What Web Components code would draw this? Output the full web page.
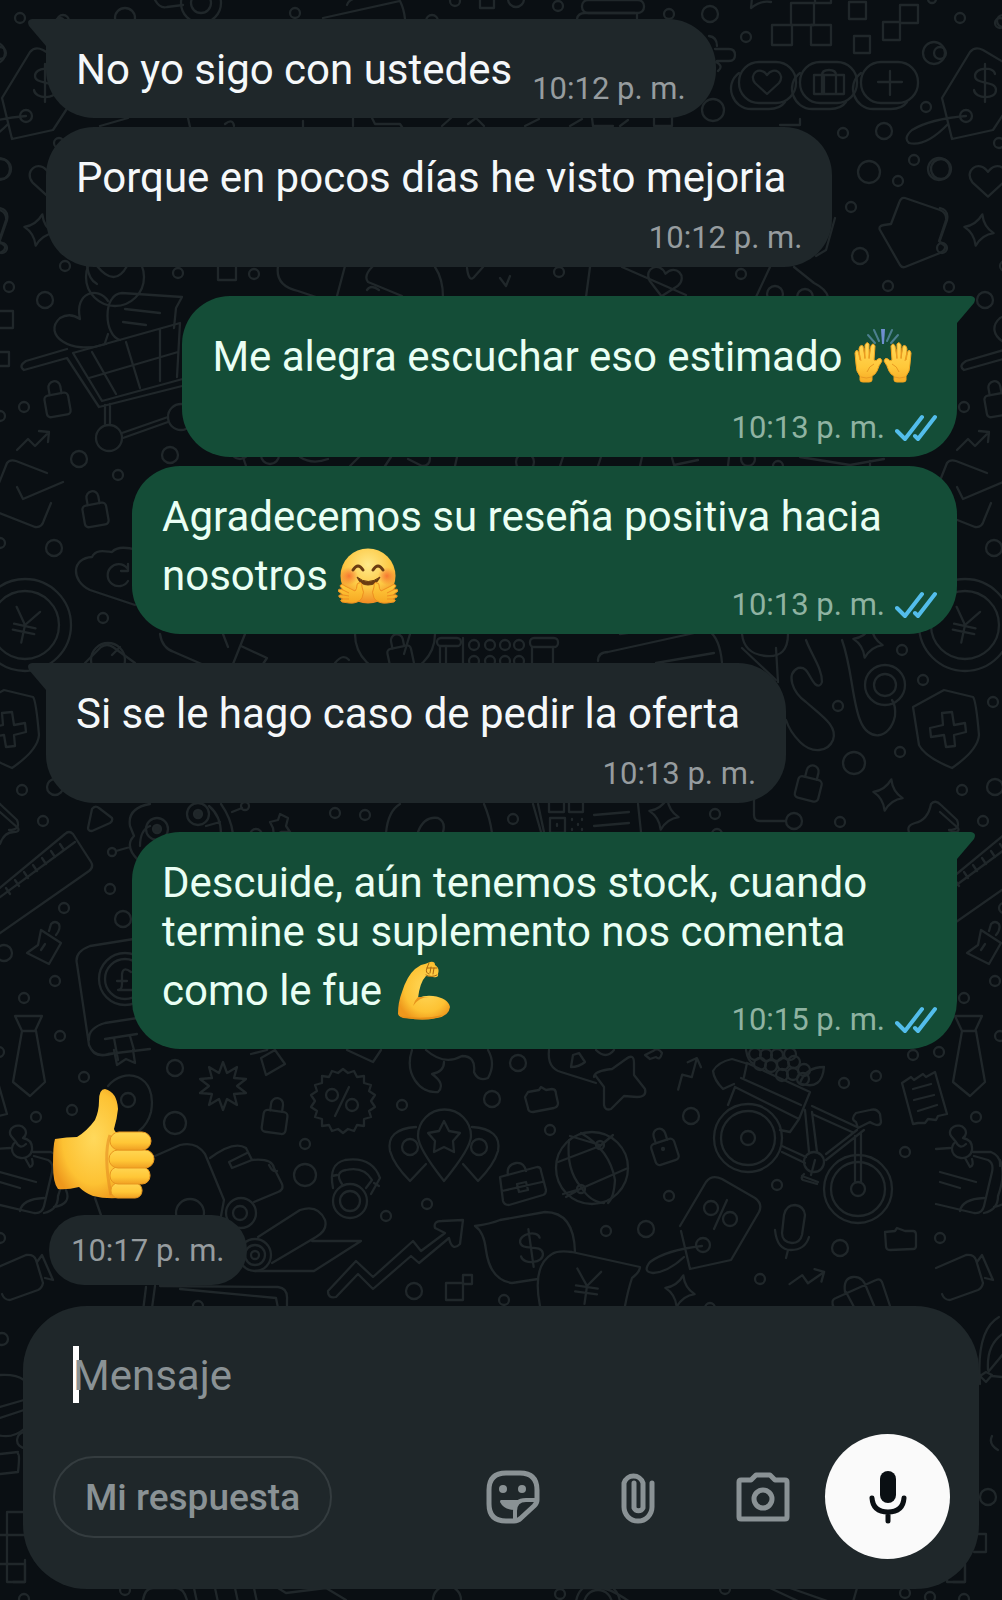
<!DOCTYPE html>
<html lang="es">
<head>
<meta charset="utf-8">
<meta name="viewport" content="width=device-width, initial-scale=1">
<title>Chat</title>
<style>
  body { margin: 0; background: #0a0f13; font-family: Roboto, "Liberation Sans", sans-serif; }
</style>
</head>
<body>
<chat-app>
  <chat-bubble tail meta="inline" time="10:12 p. m.">No yo sigo con ustedes</chat-bubble>
  <chat-bubble time="10:12 p. m.">Porque en pocos días he visto mejoria</chat-bubble>
  <chat-bubble out tail first time="10:13 p. m.">Me alegra escuchar eso estimado <chat-emoji name="hands"></chat-emoji></chat-bubble>
  <chat-bubble out meta="overlap" time="10:13 p. m.">Agradecemos su reseña positiva hacia nosotros <chat-emoji name="hug"></chat-emoji></chat-bubble>
  <chat-bubble tail first time="10:13 p. m.">Si se le hago caso de pedir la oferta</chat-bubble>
  <chat-bubble out tail first meta="overlap" time="10:15 p. m.">Descuide, aún tenemos stock, cuando termine su suplemento nos comenta como le fue <chat-emoji name="flex"></chat-emoji></chat-bubble>
  <chat-sticker time="10:17 p. m."><chat-emoji name="thumb"></chat-emoji></chat-sticker>
  <chat-composer slot="composer"></chat-composer>
</chat-app>

<script>
const define = (name, html, setup) => {
  const tpl = document.createElement('template');
  tpl.innerHTML = html;
  customElements.define(name, class extends HTMLElement {
    constructor() {
      super();
      this.attachShadow({ mode: 'open' }).append(tpl.content.cloneNode(true));
    }
    connectedCallback() { if (setup) setup(this, this.shadowRoot); }
  });
};

/* Wallpaper: small rings [x, y, r] and line doodles. The strip repeats every 940 units. */
const rings = [
  [20,18,5],[63,21,6],[125,18,10],[201,3,20],[201,3,10],[295,13,5],[455,1,5],[432,21,6],[0,53,6],[1,169,10],
  [2,248,5],[65,266,5],[178,273,5],[254,274,5],[9,287,5],[45,300,8],[558,6,5],[516,-1,8],[669,14,5],[710,14,8],
  [746,37,5],[713,110,11],[934,53,11],[926,107,5],[843,133,5],[884,131,8],[869,172,11],[898,181,5],[914,160,5],
  [939,169,11],[851,207,5],[860,256,8],[888,286,5],[741,274,5],[559,272,5],[932,-1,4],[59,143,5],[60,23,5],
  [24,407,5],[0,416,5],[79,459,8],[118,475,5],[170,455,8],[0,543,5],[54,548,8],[103,618,5],[108,660,17],
  [22,790,5],[55,787,8],[43,821,5],[110,889,5],[64,908,5],[123,919,8],[4,953,8],[55,981,5],[24,998,5],[60,1036,5],
  [335,813,5],[365,815,5],[256,835,6],[902,650,5],[923,680,5],[838,706,5],[854,763,11],[900,752,5],[53,702,5],
  [840,822,5],[513,819,5],[715,814,5],[794,821,8],[717,834,5],[84,1077,5],[72,1110,5],[36,1117,5],[175,1068,8],
  [175,1123,11],[128,1100,7],[402,1105,5],[492,1099,8],[305,1144,5],[305,1175,11],[427,1204,5],[386,1216,5],
  [414,1291,8],[518,1063,8],[550,1130,5],[691,1116,8],[669,1196,5],[646,1229,8],[606,1231,5],[777,1185,5],
  [844,1083,5],[876,1076,5],[905,1152,5],[840,1248,8],[760,1279,5],[913,1055,5],[939,1052,5],[0,1238,5],[504,1300,5],
  [198,1306,5],[710,1308,5],[2,1339,6],[24,1599,5],[125,1590,5],[560,1594,5],[905,1593,5],[930,1597,5],[447,1600,14],
  [965,1440,8],[988,1497,8],[725,1589,5],[240,450,9],[270,455,9],[525,462,9],[748,459,7],[778,466,5],[395,634,40],
  [578,1004,5],[190,1213,14],[240,1213,7]
];
const spark = (x, y, r = 15) => `<path transform="translate(${x} ${y}) rotate(12) scale(${r / 15})" d="M0-16Q4-4 15 0Q4 4 0 16Q-4 4-15 0Q-4-4 0-16z"/>`;
const lock = (x, y, a) => `<g transform="translate(${x} ${y}) rotate(${a})"><rect x="-12" y="-8" width="24" height="22" rx="4"/><path d="M-6-8v-7a6 6 0 0 1 12 0v7"/></g>`;
const rise = (x, y, a = 0) => `<path transform="translate(${x} ${y}) rotate(${a})" d="M-16 10L-5-1L2 6L15-7M6-9L16-8L15 2"/>`;
const rect = (x, y, w, h, r = 0) => `<rect x="${x}" y="${y}" width="${w}" height="${h}" rx="${r}"/>`;
const heart = (x, y, s, a = 0) => `<path transform="translate(${x} ${y}) rotate(${a}) scale(${s})" d="M0 12L-12 1C-19-8-7-17 0-7C7-17 19-8 12 1z"/>`;
const circ = (x, y, r) => `<circle cx="${x}" cy="${y}" r="${r}"/>`;
const pathStar = (x, y, n, r, q, a = 0) => {
  let d = '';
  for (let i = 0; i < n * 2; i++) {
    const t = a + Math.PI * i / n, k = i % 2 ? q : r;
    d += (i ? 'L' : 'M') + Math.round(x + k * Math.sin(t)) + ' ' + Math.round(y - k * Math.cos(t));
  }
  return `<path d="${d}z"/>`;
};
const dollar = (x, y, a = 0) => `<path transform="translate(${x} ${y}) rotate(${a})" d="M10-9C9-17-10-16-10-7C-10 2 11-3 11 7C11 17-10 16-11 7M0-19V19"/>`;
const yen = (x, y, a = 0) => `<path transform="translate(${x} ${y}) rotate(${a})" d="M-12-16L0 0L12-16M0 0V18M-11 1H11M-11 7H11"/>`;
const coin = (x, inner) => `<path d="M${x - 28} 73C${x - 44} 85 ${x - 34} 109 ${x - 16} 109H${x + 2}Q${x + 13} 109 ${x + 18} 102"/>` + rect(x - 28, 62, 57, 41, 20) + inner;

const doodles = [
  /* top strip */
  '<path d="M155 0q5 9 12 7l16-2M323 18L400 1q4 8 5 18M347 5q2-6 10-7"/>', rect(480, -8, 14, 16),
  rect(582, 0, 62, 13, 6), '<path d="M577 19q1-6 8-6h50M637 13v7M709 36q8 1 8 10M715 49h14q6 0 6 6t-6 6h-12M716 62q8 4 2 9M751 8q10-8 20-6M751 8l1-10M815 3v-8M831 3v-8M815 3h16"/>',
  rect(791, 3, 23, 22), rect(772, 25, 20, 20), rect(811, 25, 20, 20), rect(849, 2, 17, 17), rect(854, 36, 16, 17), rect(900, 5, 18, 18), rect(883, 22, 17, 18),
  coin(767, heart(767, 82, 1)), coin(828, rect(814, 75, 30, 19) + '<path d="M822 94V75q0-5 7-5t7 5v19M824 75v19"/>'), coin(889, '<path d="M878 82h24M890 71v24"/>'),
  '<path d="M942 98L970 52Q975 46 983 50L1010 66M942 98L952 139L993 130L1010 104M966 116Q930 119 912 130Q903 138 909 143Q926 147 948 124"/>', circ(966, 116, 6), dollar(985, 83),
  heart(988, 181, 1.3), spark(979, 230),
  '<path d="M905 198L940 210Q947 213 946 220L939 241L945 246Q946 250 940 253L905 267Q902 268 900 265L880 230Q878 226 884 225L891 224L899 203Q901 197 905 198zM835 218l-9 32l-10 6"/>',
  '<path d="M780 125l20 0l0-6M100 126l28-8M188 118l2 9M225 124q8-6 9 2M303 121v6M353 118v8M372 118l3 6h25l2 3M442 126l9-8M468 124l8-6l8 8M525 126l14-7M570 126l12-7M592 118l1 8h20M620 126l8-6M654 118v8h18v-8M0 208q9 2 7 12l-7 20"/>',
  /* strip above the first green bubble */
  circ(115, 277, 29), '<path d="M97 266q18 22 30 0"/>', rect(218, 262, 18, 18), '<path d="M278 266q-3 20 20 25l18 6M345 266l-8 30M373 266q-10 10-5 16l34 14M435 267q8 12 8 30M367 290q4-6 12 0M467 268q2 16 8 8l8-9M500 278l6 8l4-10M590 267l-4 30M622 267l64 28M770 267l-14 30M794 267l20 16q12 6 14 14"/>', heart(664, 282, 1.2, 10), circ(775, 294, 8), circ(805, 297, 8),
  /* cart */
  rect(-5, 311, 18, 17), rect(-5, 352, 14, 14),
  '<path d="M106 344C70 356 42 334 60 318Q70 312 80 319C74 292 98 286 108 301M120 340C104 336 102 294 122 293L182 297L176 308L174 328M125 309L160 313M123 322L146 325M108 334L105 343M87 266q2 14 10 18"/>',
  '<path d="M73 353L180 323L177 377M73 353L102 401L190 377M67 349L26 361Q18 366 24 370L67 358L99 407L190 384M92 352L116 394M126 342L140 388M160 330L160 381M89 378L178 352M105 405V424M110 404V425M122 433L168 417M123 438L168 422"/>',
  circ(109, 438, 13), circ(181, 417, 13), lock(57, 402, -10), rise(33, 440, 0),
  '<path d="M-3 488L7 463Q10 459 16 461L47 473M63 482L23 499L17 487M-3 512L35 527Q42 528 44 520L51 503"/>', lock(95, 512, -10),
  '<path d="M135 605L90 590C70 580 72 558 92 557C96 548 108 552 112 552C118 545 130 548 137 550M128 571v-7M128 571h-7M127 568a11 11 0 1 0 1 13"/>',
  circ(25, 625, 46), circ(25, 625, 34), yen(25, 625, 12),
  '<path d="M243 457l3 9M300 457q12 8 28 2M350 466l10-10M385 466l6-9M408 459l14 7q8 0 8-8M455 466l2-9M560 466l3-9M598 466l3-9M640 466l2-9M672 458l2 7l24-5M728 466l1-9M800 457l50 8l34-6M870 466v-5"/>',
  /* strip between green and grey */
  '<path d="M85 663l16-16q6-4 12 0l22 16M112 655l8-8M160 634q2 14 14 18l46 20M245 634l-12 30M241 646l26 12l-4 6M228 647l-5-13M335 663q8-10 14-3M410 634l-6 20M440 646v18M446 646v18M620 634l96-14M598 661q0-9 10-9l100-22q12 8 14 33M656 663l58-10M742 634q2 20 24 22t22-22M742 648l34 32"/>',
  lock(400, 655, -12), rect(437, 638, 24, 8, 4), rect(530, 638, 28, 9, 4), '<path d="M463 638v26M532 647v16M553 647v16"/>',
  ...[474, 490, 505, 519].flatMap(x => [circ(x, 645, 5), circ(x, 661, 5)]),
  spark(868, 642),
  '<path d="M806 640C812 656 822 668 822 682Q820 688 815 684C808 676 808 666 798 668C786 674 792 692 806 702C822 716 838 726 833 740C828 752 812 754 800 742Q790 732 786 720M842 640C852 668 852 700 860 720C868 742 890 740 895 716Q896 706 892 700M776 648l2 34"/>', circ(885, 685, 20), circ(885, 685, 11),
  '<path d="M913 707L944 690L973 697Q976 700 979 735Q978 750 952 768Q925 757 919 745zM942 713l10-1l2 13l11-2l1 9l-12 3l1 11l-9 1l-2-12l-13 2l-1-9l13-3z"/>', lock(809, 786, 14), spark(888, 795),
  /* strip between grey and green */
  '<path d="M88 828l4-19q3-4 7-1l13 10q1 3-2 5l-18 8q-4 0-4-3zM150 804Q127 808 130 826L134 836Q124 846 138 860M116 851l14-4M209 806q12 10 12 28M221 804q10 14 12 30M232 812l10-4M140 846q0-16 10-20M206 826l14-4M270 822l8-2l2-6l8 4l-2 8l4 6l-9 0l-7 4l-1-8z"/>',
  circ(157, 829, 11), circ(198, 814, 11), '<circle cx="157" cy="829" r="4" fill="#1f2629"/><circle cx="198" cy="814" r="4" fill="#1f2629"/>', circ(112, 852, 4), circ(245, 806, 4),
  '<path d="M386 833q2-22 14-29M418 832q6-16 20-14q8 4 5 14M484 804q6 14 8 29M533 804l8 28M538 804l6 28M594 815l35-3M594 826l35-3M638 804l3 28M754 800v15q0 6 6 6h26"/>',
  rect(549, 798, 15, 14), rect(569, 798, 14, 14), rect(550, 818, 15, 15), '<path d="M557 824v2M572 819v1M578 824v1M572 829v1M582 829v1M582 819v1"/>', spark(664, 814),
  '<path d="M910 834Q905 826 915 823Q928 820 931 804Q935 799 941 805L957 820Q961 830 949 830M0 812l18 16q2 4-4 4q-10 0-14 12"/>',
  /* ruler, pin, book, tie */
  '<path d="M-4 891L65 834Q69 830 73 834L91 862Q94 867 89 871L-4 936M-4 900L75 842M6 888l4 6M15 880l4 6M24 872l4 6M33 865l4 6M42 858l4 6M51 851l4 6M60 844l4 6"/>',
  '<path d="M41 930L61 943L49 964L27 953L38 945zM49 931l2-7q4-4 8 0q2 5-3 11M41 950l4-6"/>',
  '<path d="M140 938L90 946Q74 952 77 964L89 1045Q94 1058 108 1054L150 1049M150 1016L105 1023Q88 1028 89 1040M105 1039l32-5M114 1038l4 22M130 1036l4 14"/>', circ(125, 979, 26), circ(125, 979, 20), '<path d="M131 972q-8-6-9 2v10q0 6-4 6h14M117 981h10"/>',
  '<path d="M15 1016h27l-7 15h-13zM22 1031L13 1082L30 1096L45 1082L36 1031"/>',
  /* lower field */
  '<path d="M108 1086C124 1066 158 1074 151 1112Q148 1124 139 1131M92 1050q4 8 20 4M114 1050l3 15l9-6l9 4l-2-13M251 1054l16-4l2-6M275 1050l10 14l-19 11l-5-17zM347 1050l26 12l8-12M412 1050C404 1074 420 1094 438 1092Q446 1084 432 1074q12-2 12-12M426 1050q18 16 36 6q14 0 12 16q4 10 14 6q8-14 0-28"/>',
  pathStar(223, 1086, 10, 24, 14), lock(275, 1119, 8), pathStar(343, 1101, 18, 32, 28), '<path d="M349 1087l-14 29"/>', circ(332, 1095, 6), circ(352, 1105, 6),
  '<path d="M444 1181Q418 1148 418 1136a26 26 0 0 1 53 0Q471 1148 444 1181zM416 1127q-30 2-26 24q4 14 20 30l16-17M472 1127q30 2 26 24q-4 14-20 30l-15-17"/>', pathStar(444, 1138, 5, 17, 9), circ(410, 1147, 8), circ(479, 1147, 8),
  '<path d="M155 1156L180 1145Q196 1141 205 1154L224 1200L221 1216M95 1198l7 20M210 1158q24-18 36-10l6 12q20-2 22 8l8 16q2 6-4 8l-24 10M247 1153l-18 9l3 6l20-8M269 1165q4 8 8 6"/>', circ(241, 1213, 15),
  '<path d="M333 1188Q328 1164 345 1160Q372 1156 380 1178L371 1194M342 1184Q334 1172 346 1170Q364 1166 372 1180L366 1188M332 1176l5-1M374 1183l5 3"/>', circ(350, 1201, 17), circ(350, 1201, 10),
  '<path d="M258 1237L300 1210Q318 1204 325 1220Q328 1230 316 1237L272 1263M312 1241H361L314 1271H255"/>', circ(255, 1255, 16), circ(255, 1255, 10), circ(255, 1255, 4),
  '<path d="M328 1291L356 1261L373 1277L413 1241L421 1251L445 1233L435 1228Q433 1221 442 1221L463 1220L460 1244Q452 1252 449 1238L419 1263L411 1256L373 1289L358 1274L336 1297Q328 1299 328 1291z"/>',
  rect(446, 1283, 17, 17), rect(463, 1275, 9, 9),
  '<path d="M146 1287l-3 24M155 1286l-3 22M160 1286L278 1287Q288 1288 287 1300V1308M180 1289l96 9l2 10M-4 1268L26 1255Q34 1254 36 1260L43 1283Q42 1288 38 1290L10 1300Q4 1300 2 1294M37 1262l5-7l11 25l-8-2"/>',
  '<path d="M11 1136a8 7 0 1 1 12 2q10 2 9 12a10 9 0 1 1-20-2q1-5 4-6zM16 1142q4 8 10 2M25 1158l5 9q4-1 2-8M33 1152l18 0q10 4 9 14M-4 1149l14-1M34 1156l14 4q6 3 4 12l-8 34q-2 8-10 7L-4 1204M0 1172l36 10M0 1182l20 6M20 1211q2-12 24-13M60 1160q6 14-2 36q0 14-14 17M66 1190q6 14-12 17"/>',
  '<path d="M549 1050q-2 18 12 22l35 11M573 1055l-2 12q8 0 14-5l-6-9zM596 1050q10 10 18 0M645 1055l8-4q5-4 9 2q-2 8-6 4l-6 2z"/>',
  '<path d="M594 1077q0-6 18-8l14-10q8-6 8 4v12l11 14q2 8-8 8l-13-1l-13 13q-6 2-7-4v-18l-9-12"/>', rise(687, 1073, -30),
  '<path d="M528 1092l11-2l2-3l5 3l6-1q4 0 4 5l2 9q0 4-4 5l-21 4q-5 0-5-4l-3-11z"/>', lock(664, 1149, -18), circ(663, 1149, 1),
  circ(592, 1168, 36), '<path d="M569 1140Q566 1170 581 1187Q590 1202 604 1203M581 1133Q610 1150 615 1180Q614 1198 608 1203M558 1162L600 1146L613 1135M563 1194L580 1189L628 1168M570 1136l30 9M580 1189l-14 8"/>', circ(600, 1145, 4), circ(581, 1189, 4),
  '<path d="M500 1177l37-10q4 0 4 4l5 19q0 4-3 5l-34 10q-5 0-6-4zM502 1191l40-9M508 1175q-2-10 8-12q8-1 10 8M517 1184l9-2l2 8l-9 2z"/>',
  '<path d="M680 1226L706 1182Q712 1174 722 1179L755 1198Q763 1204 759 1212L731 1260L690 1269L681 1231M702 1246Q666 1250 650 1262Q642 1272 653 1273Q668 1272 684 1257M727 1200l-13 29"/>', circ(703, 1245, 7), circ(711, 1208, 7), circ(730, 1219, 7),
  '<path d="M475 1226Q490 1224 500 1220L545 1212Q574 1212 575 1252M475 1226Q484 1232 486 1250Q490 1280 512 1283L538 1279M540 1306Q532 1266 552 1254Q558 1250 572 1252L640 1267Q640 1272 632 1278Q628 1290 625 1306"/>', dollar(531, 1248, -8), yen(587, 1286, 8), spark(680, 1291),
  /* bicycle */
  circ(748, 1138, 34), circ(748, 1138, 27), circ(748, 1138, 7), circ(858, 1189, 34), circ(858, 1189, 27), circ(858, 1189, 7), circ(814, 1162, 10),
  '<path d="M745 1063l-13-4Q718 1062 713 1071Q714 1080 723 1089L734 1084M747 1063L810 1092L799 1119L735 1087M747 1063l-3 14M741 1078l60 27M735 1087l-7 18M799 1119l-9 13l-10-2M812 1106L857 1127M812 1114L852 1132M805 1110L809 1152M812 1112L817 1152M857 1130L826 1154M864 1130L826 1160M855 1136V1182M861 1134V1182M782 1146L806 1157M782 1152L805 1163M858 1128l12-6q10 6 11 0l-1-8q-3-6-10-4l-14 3q-6 6 0 9zM815 1160l-4 15M802 1176l16 6M804 1174q-4 4-1 6l14 4M746 1050q2 12 8 14M802 1084q20 6 22-17q-18 0-24 16"/>',
  ...[[755,1054],[766,1055],[777,1055],[760,1064],[771,1066],[783,1064],[790,1054],[794,1062],[782,1075],[793,1074],[804,1070],[803,1079]].map(p => circ(p[0], p[1], 6)),
  '<path d="M784 1215q2-10 11-10q9 1 10 10l-3 20q-2 8-10 8q-10-1-10-10zM775 1230q2 20 16 20q14 0 18-13M788 1250l-2 8"/>', rise(807, 1277, 10),
  '<path d="M902 1083l9-6l3 3l9-6l3 3l9-5l12 42l-9 2l-2 4l-8-1l-3 4l-7 0l-5 1zM913 1089l18-5M914 1100l20-5M918 1111l19-6M885 1232l10-1l2-3l8 3h8q3 0 3 4v11q0 3-3 3l-23 1q-4 0-4-4z"/>',
  '<path d="M834 1308q-4-8 2-10l40-18q4-2 6 2l8 24M845 1292q-2-14 8-15q10-1 14 12l8 19M846 1292l8 15"/>',
  /* around the composer */
  '<path d="M0 1375Q16 1374 24 1380M0 1407l24-7M0 1418l24-8M-3 1435q16 4 27-6M0 1454l18-2M0 1474l18-2q2-18 0-18M7 1512h20M7 1512v70h18v-18h-25M0 1535h24M143 1600q2-12 10-12h20q10-2 14 12M194 1588l3 14M215 1588l3 14M235 1588l3 14M254 1588l3 14M278 1588l8 5l40-5l20 12M630 1602q-20-14-30-14h-20M770 1588l30 14M790 1588l40 14M857 1588l-4 14M980 1384Q976 1330 999 1317M988 1370Q986 1340 1010 1330M986 1372l-6 4l6 6l6-7zM989 1371l20-24M992 1376l20 2M998 1450q-10-6-6-14M965 1560v22h-12M976 1534h10v18h-12"/>', circ(598, 1604, 22), circ(598, 1604, 14)
].join('') + rings.map(c => circ(...c)).join('');

define('chat-wallpaper', `
  <style>
    :host { display: block; overflow: hidden; contain: size; background: #0a0f13; }
    svg { display: block; width: 100%; height: 100%; }
    g { fill: none; stroke: #20272a; stroke-width: 2.3; stroke-linecap: round; stroke-linejoin: round; }
    path { vector-effect: non-scaling-stroke; }
  </style>
  <svg viewBox="0 0 1002 1600" preserveAspectRatio="xMinYMin slice" aria-hidden="true">
    <g><g id="tile">${doodles}</g><use href="#tile" x="940"/><use href="#tile" x="-940"/></g>
  </svg>`);

const hand = `
  <path d="M2 31Q3 27 5 29L7 38L6 27Q7 22 10 24L12 36L12 23Q14 19 16 22L16 36L18 24Q20 20 22 24L21 38Q23 40 25 37Q28 35 29 39Q26 43 24 49Q22 53 19 54V58Q19 60 16 60H10Q7 60 7 58V54Q3 50 3 42z" fill="url(#g)" stroke="#f3a51f" stroke-width="1"/>
  <path d="M6 30L8 39M11 26L12 37M17 27L16 37M8 55Q13 57 19 55M14 50Q16 44 21 42" fill="none" stroke="#e99a22" stroke-width="1"/>`;
const grad = `<defs>
  <linearGradient id="g" gradientUnits="userSpaceOnUse" x1="0" y1="20" x2="0" y2="62"><stop offset="0" stop-color="#ffd95a"/><stop offset=".6" stop-color="#ffc83a"/><stop offset="1" stop-color="#f6a722"/></linearGradient>
  <radialGradient id="f" cx=".5" cy=".3" r=".7"><stop offset="0" stop-color="#ffe98a"/><stop offset=".6" stop-color="#fdc843"/><stop offset="1" stop-color="#f08a24"/></radialGradient>
  <radialGradient id="c"><stop offset="0" stop-color="#f4642c" stop-opacity=".8"/><stop offset="1" stop-color="#f4642c" stop-opacity="0"/></radialGradient>
  <radialGradient id="p" cx=".55" cy=".45" r=".6"><stop offset="0" stop-color="#ffd95c"/><stop offset=".7" stop-color="#fdc233"/><stop offset="1" stop-color="#ee981c"/></radialGradient>
  <linearGradient id="k" x1="0" y1="0" x2="0" y2="1"><stop offset="0" stop-color="#ffd652"/><stop offset=".6" stop-color="#ffc636"/><stop offset="1" stop-color="#f0a023"/></linearGradient>
</defs>`;
const emojis = {
  hands: ['Manos levantadas', '0 0 60 64', grad + hand + `<g transform="matrix(-1 0 0 1 60 0)">${hand}</g>
    <path d="M28 7h4l-1 15h-2z" fill="#6f8fd0"/><path d="M21 8l5 11M39 8l-5 11M15 13l7 8M45 13l-7 8" stroke="#4c7f8f" stroke-width="2" stroke-linecap="round"/>`],
  hug: ['Cara con abrazo', '0 0 60 64', grad + `<circle cx="30" cy="35" r="27.5" fill="url(#f)"/>
    <circle cx="11" cy="35" r="9" fill="url(#c)"/><circle cx="49" cy="35" r="9" fill="url(#c)"/>
    <path d="M15 29Q20 21 25 29M35 29Q40 21 45 29" fill="none" stroke="#6b3c12" stroke-width="3" stroke-linecap="round"/>
    <path d="M19 36Q30 45 42 36Q39 44 30 44Q22 44 19 36z" fill="#6b3c12" stroke="#6b3c12" stroke-linejoin="round"/>
    <g id="h" fill="url(#g)" stroke="#ee8f20" stroke-width="1" stroke-linejoin="round"><path d="M21 42Q24 40 24 46Q27 51 24 57Q20 63 11 62L4 61Q1 59 5 58L1 56Q0 53 5 54L0 50Q0 47 5 49L2 45Q3 42 7 45L17 50Q19 48 19 44Q19 42 21 42z"/><path d="M5 49L11 52M5 54L11 55M5 58L11 58" fill="none"/></g>
    <use href="#h" transform="matrix(-1 0 0 1 60 0)"/>`],
  flex: ['Bíceps', '0 0 60 64', grad + `<path d="M28 9Q33 8 37 6Q42 5 42 9Q47 12 45 18Q46 22 40 21L33 20Q27 26 25 42Q32 39 40 40Q55 42 57 51Q56 60 44 62Q30 65 14 62Q6 62 5 58Q5 46 9 36Q14 20 22 13z" fill="url(#p)"/>
    <path d="M36 7L34 12Q32 17 36 18M34 12H44M38 11L37 17M41 12L40 18M33 19Q38 22 44 19" fill="none" stroke="#a8650f" stroke-width="1" stroke-linecap="round"/>
    <path d="M25 41Q21 45 20 50Q26 41 36 41" fill="#e8951c"/><path d="M8 60Q30 64 50 59Q40 66 10 62z" fill="#e78f17"/>`],
  thumb: ['Pulgar hacia arriba', '0 0 102 110', grad + `
    <path d="M2 50Q14 48 24 48Q34 42 42 31Q46 22 46 12Q46 0 52 0Q64 3 65 20Q64 30 61 40Q62 44 66 44L74 60V108Q56 111 40 107Q32 104 26 98Q14 101 5 100Q0 94 0 76Q0 56 2 50z" fill="url(#p)"/>
    <path d="M57 46Q50 66 58 106" fill="none" stroke="#e07f1c" stroke-width="3" opacity=".5"/>
    <g fill="url(#k)" stroke="#e8961f" stroke-width="1"><rect x="58" y="94" width="31" height="15" rx="7"/><rect x="57" y="78" width="40" height="17" rx="8"/><rect x="56" y="61" width="45" height="18" rx="9"/><rect x="57" y="43" width="41" height="18" rx="9"/></g>`]
};
define('chat-emoji', `
  <style>
    :host { display: inline-block; width: 60px; height: 64px; margin: 0 14px 6px 0; vertical-align: -21px; }
    :host([name="thumb"]) { display: block; width: 102px; height: 110px; margin: 0; }
    svg { display: block; width: 100%; height: 100%; }
  </style>
  <svg role="img"></svg>`, (host, root) => {
  const [label, box, art] = emojis[host.getAttribute('name')];
  const svg = root.querySelector('svg');
  svg.setAttribute('viewBox', box);
  svg.setAttribute('aria-label', label);
  svg.innerHTML = art;
});

define('chat-bubble', `
  <style>
    :host { --fill: #1f272a; --time: #969c9f; display: grid; position: relative; align-self: flex-start; box-sizing: border-box; max-width: 825px;
      row-gap: 17px; padding: 26px 20px 10px; border-radius: 48px; background: var(--fill); color: #f5f8fa; }
    :host([out]) { --fill: #144d37; --time: #8fb3a2; align-self: flex-end; color: #eafff4; }
    :host([first]) { margin-top: 20px; }
    :host([tail]) { border-top-left-radius: 0; }
    :host([out][tail]) { border-top-left-radius: 48px; border-top-right-radius: 0; }
    .text { padding: 0 10px; font-size: 42px; line-height: 49px; }
    :host(:not([out]):not([meta])) .text { padding-right: 26px; }
    .meta { display: flex; align-items: center; justify-self: end; align-self: end; gap: 10px; padding-right: 10px; color: var(--time); font-size: 31px; line-height: 38px; white-space: nowrap; }
    :host([out]) .meta { padding-right: 0; }
    :host([meta="inline"]) { grid-template-columns: auto auto; column-gap: 10px; }
    :host([meta="inline"]) .text { padding-bottom: 14px; }
    :host([meta="overlap"]) .text { padding-bottom: 13px; }
    :host([meta="overlap"]) .text, :host([meta="overlap"]) .meta { grid-area: 1 / 1; }
    .tail, .ticks { display: none; }
    .tail { position: absolute; top: 0; right: 100%; width: 18px; height: 28px; fill: var(--fill); }
    :host([tail]) .tail { display: block; }
    :host([out]) .tail { right: auto; left: 100%; transform: scaleX(-1); }
    :host([out]) .ticks { display: block; width: 42px; height: 28px; fill: none; stroke: #53bdeb; stroke-width: 4; stroke-linecap: round; stroke-linejoin: round; }
  </style>
  <svg class="tail" viewBox="0 0 18 28" aria-hidden="true"><path d="M18 0H4Q-2 1 1 7L18 27z"/></svg>
  <div class="text"><slot></slot></div>
  <div class="meta"><time></time><svg class="ticks" viewBox="0 0 42 28" role="img" aria-label="Leído"><path d="M2 17L10 25L27 3M20 22L23 25L40 3"/></svg></div>`,
  (host, root) => { root.querySelector('time').textContent = host.getAttribute('time'); });

define('chat-sticker', `
  <style>
    :host { display: flex; flex-direction: column; align-items: flex-start; gap: 16px; margin-top: 31px; padding-left: 3px; }
    .art { padding-left: 4px; }
    time { padding: 17px 22px 15px; border-radius: 35px; background: #1f272a; color: #969c9f; font-size: 31px; line-height: 38px; }
  </style>
  <div class="art"><slot></slot></div><time></time>`,
  (host, root) => { root.querySelector('time').textContent = host.getAttribute('time'); });

define('chat-composer', `
  <style>
    :host { display: flex; flex-direction: column; gap: 31px; margin: 20px 23px 11px; padding: 40px 29px 30px 30px; border-radius: 64px; background: #1f272a; }
    .field { position: relative; display: flex; isolation: isolate; }
    input { flex: 1; min-width: 0; height: 57px; box-sizing: border-box; padding: 2px 20px 0; border: 0; outline: 0; background: none; color: #f5f8fa; font: 42px/49px Roboto, "Liberation Sans", sans-serif; }
    input::placeholder { color: #8a9295; opacity: 1; }
    .caret { position: absolute; top: 0; left: 20px; z-index: -1; width: 6px; height: 57px; background: #fff; }
    .bar { display: flex; align-items: center; }
    button { display: flex; align-items: center; justify-content: center; padding: 0; border: 0; background: none; color: #8a9295; font: 500 37px/42px Roboto, "Liberation Sans", sans-serif; }
    .chip { height: 82px; margin-right: auto; padding: 2px 30px 0; border: 2px solid #343c3f; border-radius: 41px; white-space: nowrap; }
    .tool { width: 125px; height: 125px; }
    .mic { width: 125px; height: 125px; border-radius: 50%; background: #fafafa; color: #0a0f13; }
    svg { display: block; fill: none; stroke: currentColor; stroke-width: 5; stroke-linecap: round; stroke-linejoin: round; }
    .solid { fill: currentColor; stroke: none; }
  </style>
  <div class="field"><input type="text" placeholder="Mensaje" aria-label="Mensaje"><span class="caret"></span></div>
  <div class="bar">
    <button class="chip" type="button">Mi respuesta</button>
    <button class="tool" type="button" aria-label="Stickers"><svg width="54" height="54" viewBox="0 0 54 54"><path d="M20 3H34Q51 3 51 20V30Q51 33 48 36L35 48Q32 51 28 51H20Q3 51 3 34V20Q3 3 20 3z"/><path d="M50 30H40Q29 30 29 41V50" stroke-width="4"/><path class="solid" d="M15 30H37Q29 34 29 40Q18 40 14 32Q14 30 15 30z"/><circle class="solid" cx="17" cy="19" r="4"/><circle class="solid" cx="36" cy="19" r="4"/></svg></button>
    <button class="tool" type="button" aria-label="Adjuntar"><svg width="34" height="54" viewBox="0 0 34 54"><path d="M31 13V37A14 14 0 0 1 3 37V13A10 10 0 0 1 22 13V38A5 5 0 0 1 13 38V13"/></svg></button>
    <button class="tool" type="button" aria-label="Cámara"><svg width="54" height="50" viewBox="0 0 54 50"><path d="M5 8H15L20 3H34L39 8H49Q51 8 51 10V45Q51 47 49 47H5Q3 47 3 45V10Q3 8 5 8z"/><circle cx="27" cy="27" r="9"/></svg></button>
    <button class="mic" type="button" aria-label="Mensaje de voz"><svg width="38" height="54" viewBox="0 0 38 54"><rect class="solid" x="11" y="1" width="16" height="32" rx="8"/><path d="M3 28Q4 42 19 42T35 28M19 43V51"/></svg></button>
  </div>`);

define('chat-app', `
  <style>
    :host { display: grid; min-height: 100vh; }
    chat-wallpaper, .screen { grid-area: 1 / 1; min-width: 0; }
    .screen { position: relative; display: flex; flex-direction: column; }
    main { display: flex; flex: 1; flex-direction: column; gap: 9px; padding: 19px 45px 0 46px; }
  </style>
  <chat-wallpaper></chat-wallpaper>
  <div class="screen"><main><slot></slot></main><slot name="composer"></slot></div>`);
</script>
</body>
</html>
